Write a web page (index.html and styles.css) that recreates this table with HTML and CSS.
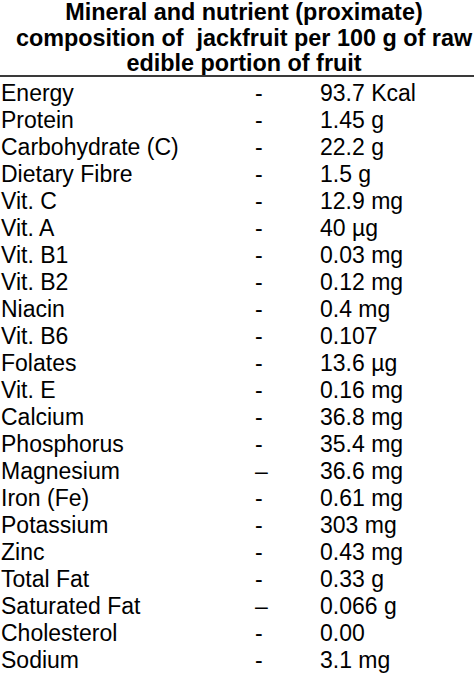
FILE: index.html
```html
<!DOCTYPE html>
<html>
<head>
<meta charset="utf-8">
<link rel="stylesheet" href="styles.css">
</head>
<body>
<div class="page">
  <h1 class="title">Mineral and nutrient (proximate)<br>composition of &nbsp;jackfruit per 100 g of raw<br>edible portion of fruit</h1>
  <div class="table">
    <div class="row"><span>Energy</span><span>-</span><span>93.7 Kcal</span></div>
    <div class="row"><span>Protein</span><span>-</span><span>1.45 g</span></div>
    <div class="row"><span>Carbohydrate (C)</span><span>-</span><span>22.2 g</span></div>
    <div class="row"><span>Dietary Fibre</span><span>-</span><span>1.5 g</span></div>
    <div class="row"><span>Vit. C</span><span>-</span><span>12.9 mg</span></div>
    <div class="row"><span>Vit. A</span><span>-</span><span>40 µg</span></div>
    <div class="row"><span>Vit. B1</span><span>-</span><span>0.03 mg</span></div>
    <div class="row"><span>Vit. B2</span><span>-</span><span>0.12 mg</span></div>
    <div class="row"><span>Niacin</span><span>-</span><span>0.4 mg</span></div>
    <div class="row"><span>Vit. B6</span><span>-</span><span>0.107</span></div>
    <div class="row"><span>Folates</span><span>-</span><span>13.6 µg</span></div>
    <div class="row"><span>Vit. E</span><span>-</span><span>0.16 mg</span></div>
    <div class="row"><span>Calcium</span><span>-</span><span>36.8 mg</span></div>
    <div class="row"><span>Phosphorus</span><span>-</span><span>35.4 mg</span></div>
    <div class="row"><span>Magnesium</span><span>–</span><span>36.6 mg</span></div>
    <div class="row"><span>Iron (Fe)</span><span>-</span><span>0.61 mg</span></div>
    <div class="row"><span>Potassium</span><span>-</span><span>303 mg</span></div>
    <div class="row"><span>Zinc</span><span>-</span><span>0.43 mg</span></div>
    <div class="row"><span>Total Fat</span><span>-</span><span>0.33 g</span></div>
    <div class="row"><span>Saturated Fat</span><span>–</span><span>0.066 g</span></div>
    <div class="row"><span>Cholesterol</span><span>-</span><span>0.00</span></div>
    <div class="row"><span>Sodium</span><span>-</span><span>3.1 mg</span></div>
  </div>
</div>
</body>
</html>
```
FILE: styles.css
```css
html, body {
  margin: 0;
  padding: 0;
  background: #fff;
}
body {
  width: 474px;
  height: 674px;
  overflow: hidden;
  font-family: "Liberation Sans", Arial, sans-serif;
  color: #000;
}
.page {
  display: flex;
  flex-direction: column;
}
.title {
  margin: 0;
  padding: 0 0 0 14px;
  font-size: 23.4px;
  font-weight: bold;
  line-height: 25.5px;
  text-align: center;
  white-space: nowrap;
  color: #000;
}
.table {
  margin-top: -1.5px;
  padding-top: 2.5px;
  border-top: 2px solid #3a3a3a;
}
.row {
  display: grid;
  grid-template-columns: 254px 65px 1fr;
  padding-left: 1px;
  font-size: 23px;
  line-height: 27px;
  white-space: nowrap;
}
```
